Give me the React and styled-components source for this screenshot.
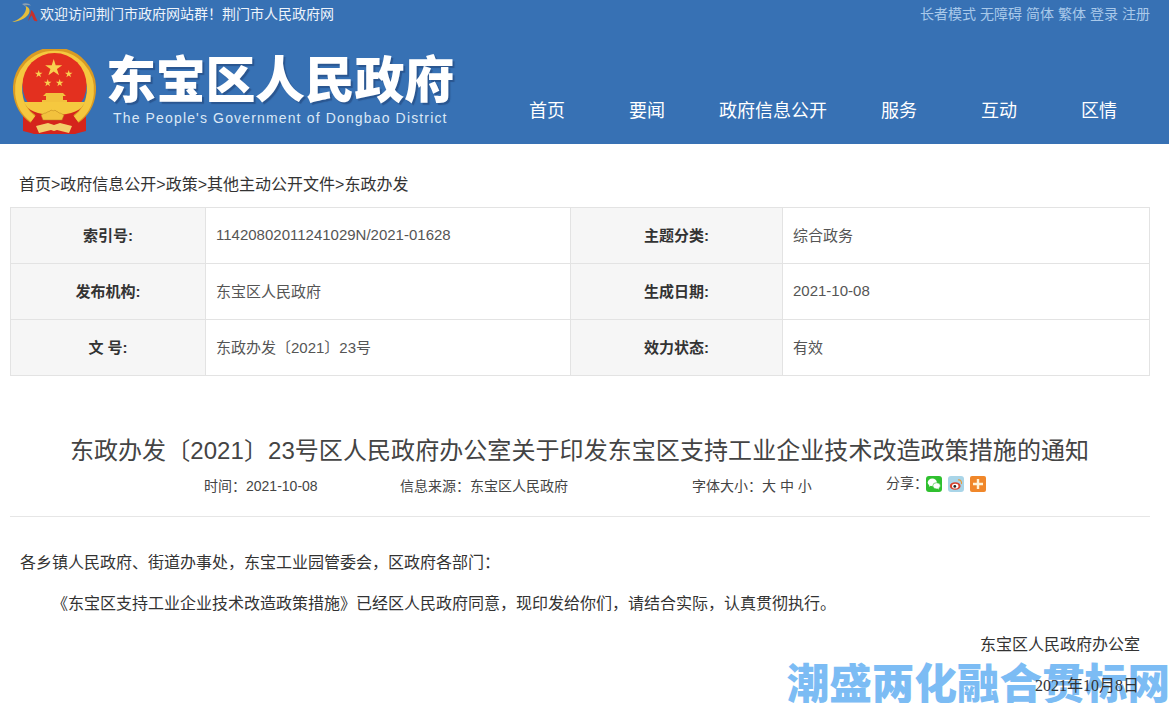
import styled, { createGlobalStyle } from 'styled-components'

const cjk = `"Liberation Sans", "Noto Sans CJK SC", sans-serif`

const Global = createGlobalStyle`
  html, body { margin: 0; padding: 0; background: #fff; }
  body { font-family: ${cjk}; color: #333; }
`

const Page = styled.div`
  position: relative;
  width: 1169px;
  height: 703px;
  overflow: hidden;
`

const Header = styled.header`
  height: 144px;
  background: #3771b4;
  display: flex;
  flex-direction: column;
`

const TopBar = styled.div`
  height: 25px;
  padding: 1px 19px 0 12px;
  box-sizing: border-box;
  display: flex;
  align-items: center;
  justify-content: space-between;
  font-size: 14px;
`

const Welcome = styled.div`
  display: flex;
  align-items: center;
  gap: 1px;
  color: #eef4fb;
`

const Tools = styled.div`
  display: flex;
  gap: 4px;
  color: #a9c9ea;
`

const MainRow = styled.div`
  flex: 1;
  display: flex;
  justify-content: space-between;
  padding-left: 13px;
`

const Brand = styled.div`
  display: flex;
  gap: 11px;
  padding-top: 24px;
`

const BrandText = styled.div`
  display: flex;
  flex-direction: column;
`

const SiteName = styled.div`
  margin: 4px 0 0 -1px;
  font-size: 50px;
  line-height: 56px;
  font-weight: 900;
  letter-spacing: -0.3px;
  white-space: nowrap;
  color: #fff;
  text-shadow: 2px 2px 1px #2a5690;
`

const SiteNameEn = styled.div`
  margin-left: 6px;
  font-size: 14px;
  line-height: 18px;
  letter-spacing: 1.15px;
  white-space: nowrap;
  color: #dbe8f6;
`

const Nav = styled.nav`
  display: flex;
  align-items: flex-end;
  padding: 0 20px 20px 0;
`

const NavItem = styled.a`
  width: ${p => (p.$wide ? '152px' : '100px')};
  text-align: center;
  font-size: 18px;
  line-height: 26px;
  color: #fff;
`

const Crumbs = styled.div`
  padding: 29px 0 0 19px;
  font-size: 16px;
  line-height: 24px;
  color: #333;
`

const InfoTable = styled.div`
  margin: 10px 19px 0 10px;
  display: grid;
  grid-template-columns: 195px 365px 212px 1fr;
  grid-auto-rows: 56px;
  border-top: 1px solid #e3e3e3;
  border-left: 1px solid #e3e3e3;
`

const Cell = styled.div`
  display: flex;
  align-items: center;
  padding-bottom: 3px;
  box-sizing: border-box;
  border-right: 1px solid #e3e3e3;
  border-bottom: 1px solid #e3e3e3;
  font-size: 15px;
  color: ${p => (p.$label ? '#333' : '#555')};
  font-weight: ${p => (p.$label ? 700 : 400)};
  background: ${p => (p.$label ? '#f6f6f6' : '#fff')};
  justify-content: ${p => (p.$label ? 'center' : 'flex-start')};
  padding-left: ${p => (p.$label ? '0' : '10px')};
`

const Heading = styled.h1`
  margin: 57px 10px 0 0;
  text-align: center;
  font-size: 24px;
  line-height: 36px;
  font-weight: 400;
  letter-spacing: 0.07px;
  color: #444;
  white-space: nowrap;
`

const MetaRow = styled.div`
  height: 47px;
  margin: 0 19px 0 10px;
  padding-left: 194px;
  border-bottom: 1px solid #e6e6e6;
  display: grid;
  grid-template-columns: 196px 292px 194px 1fr;
  font-size: 14px;
  color: #444;
`

const MetaItem = styled.div`
  padding-top: 8px;
  line-height: 18px;
  white-space: nowrap;
`

const Share = styled.div`
  display: flex;
  align-items: flex-start;
  gap: 6px;
  padding-top: 7px;
  line-height: 14px;
`

const ShareLabel = styled.span`
  width: 34px;
  white-space: nowrap;
  color: #444;
`

const Article = styled.div`
  padding: 25px 29px 0 20px;
  font-size: 16px;
  line-height: 41px;
  color: #333;
  position: relative;
  z-index: 1;
`

const Para = styled.p`
  margin: 0;
  text-indent: ${p => (p.$indent ? '32px' : '0')};
  text-align: ${p => (p.$right ? 'right' : 'left')};
  white-space: nowrap;
`

const DateLine = styled(Para)`
  font-family: "Liberation Serif", "Noto Sans CJK SC", serif;
  padding-right: 1px;
`

const Watermark = styled.div`
  position: absolute;
  right: -1px;
  bottom: -6px;
  font-size: 42.6px;
  line-height: 50px;
  font-weight: 900;
  white-space: nowrap;
  color: #7cbcf4;
`

const starPoints = (cx, cy, r) => {
  const pts = []
  for (let i = 0; i < 10; i++) {
    const a = -Math.PI / 2 + (i * Math.PI) / 5
    const d = i % 2 ? r * 0.38 : r
    pts.push(`${(cx + d * Math.cos(a)).toFixed(2)},${(cy + d * Math.sin(a)).toFixed(2)}`)
  }
  return pts.join(' ')
}

function Emblem() {
  return (
    <svg width="83" height="86" viewBox="0 0 83 86">
      <path d="M10 58h63v24c-4 1-8 2-11 3H21c-3-1-7-2-11-3z" fill="#d5241c" />
      <path d="M20 70A37 37 0 1 1 63 70" fill="none" stroke="#d99a23" strokeWidth="9" />
      <path d="M20 70A36 36 0 1 1 63 70" fill="none" stroke="#f5c83f" strokeWidth="7" />
      <circle cx="41.5" cy="36" r="32" fill="#e3301f" />
      <polygon points={starPoints(40.7, 19, 9)} fill="#f9d04f" />
      <polygon points={starPoints(25.7, 25, 4)} fill="#f9d04f" />
      <polygon points={starPoints(55.7, 25, 4)} fill="#f9d04f" />
      <polygon points={starPoints(34.7, 34, 4)} fill="#f9d04f" />
      <polygon points={starPoints(46.7, 34, 4)} fill="#f9d04f" />
      <path d="M30 47l3-3h17l3 3h-3v4h4v3H29v-3h4v-4z" fill="#f2c23d" />
      <path d="M11 53h61c-3 8-13 13-30.500 13S14 61 11 53z" fill="#f5c83f" />
      <path d="M33 64c2-2 4-1 5-3 2 1 3 1 4 0 1 2 3 1 4 3 2 0 3 1 5 2l-2 5H30l-2-5c2-1 3-2 5-2z" fill="#f2c23d" stroke="#b77f1f" strokeWidth=".5" />
      <path d="M23 77l12-3 6 2 6-2 12 3-3 7-12-3-3 1-3-1-12 3z" fill="#f3cf6a" />
    </svg>
  )
}

function TopLogo() {
  return (
    <svg width="27" height="20" viewBox="0 0 27 20">
      <path d="M0 19C7 17 13 12 14 6c.2-1.500-.3-2.500-1-3.200 3.300 1 5 3 4.500 6C16.500 14 8 19 0 19z" fill="#e4bd3c" />
      <path d="M10 1c3-1.300 7-.8 9 1.500-2.500-.7-5-.9-6.500.2z" fill="#8b9fb4" />
      <path d="M19 7c2 1 3.500 4 4.500 7l2 4c-2 .6-3.500 0-4.300-2-.5-1.500-1-3-1.800-3.500l-3 5.500c0-3 2.600-6 2.600-11z" fill="#c8302a" />
    </svg>
  )
}

function WechatIcon() {
  return (
    <svg width="16" height="16" viewBox="0 0 16 16">
      <rect width="16" height="16" rx="3" fill="#2fc02f" />
      <ellipse cx="6.300" cy="6.400" rx="4.600" ry="3.800" fill="#fff" />
      <path d="M3.500 8.500l-.6 2.200 2.400-1.200z" fill="#fff" />
      <ellipse cx="10.600" cy="9.800" rx="3.800" ry="3.100" stroke="#2fc02f" strokeWidth=".6" fill="#fff" />
      <path d="M12.400 12l.6 1.600-2-1z" fill="#fff" />
    </svg>
  )
}

function WeiboIcon() {
  return (
    <svg width="16" height="16" viewBox="0 0 16 16">
      <rect width="16" height="16" rx="3" fill="#a9d5e8" />
      <ellipse cx="7.200" cy="10" rx="5.400" ry="3.800" fill="#d9442e" />
      <ellipse cx="7.200" cy="10.200" rx="3.200" ry="2.400" fill="#fff" />
      <circle cx="6.800" cy="10.400" r="1.400" fill="#222" />
      <path d="M10 4c2.500-.5 4 1.400 3.400 4" stroke="#e8993a" strokeWidth="1.200" fill="none" />
    </svg>
  )
}

function PlusIcon() {
  return (
    <svg width="16" height="16" viewBox="0 0 16 16">
      <rect width="16" height="16" rx="2" fill="#f0872a" />
      <path d="M6.800 3h2.400v3.800H13v2.400H9.200V13H6.800V9.200H3V6.800h3.800z" fill="#fff3d8" />
    </svg>
  )
}

const navItems = ['首页', '要闻', '政府信息公开', '服务', '互动', '区情']
const tools = ['长者模式', '无障碍', '简体', '繁体', '登录', '注册']
const infoRows = [
  ['索引号:', '11420802011241029N/2021-01628', '主题分类:', '综合政务'],
  ['发布机构:', '东宝区人民政府', '生成日期:', '2021-10-08'],
  ['文 号:', '东政办发〔2021〕23号', '效力状态:', '有效'],
]

export default function App() {
  return (
    <Page>
      <Global />
      <Header>
        <TopBar>
          <Welcome>
            <TopLogo />
            欢迎访问荆门市政府网站群！荆门市人民政府网
          </Welcome>
          <Tools>
            {tools.map(t => <span key={t}>{t}</span>)}
          </Tools>
        </TopBar>
        <MainRow>
          <Brand>
            <Emblem />
            <BrandText>
              <SiteName>东宝区人民政府</SiteName>
              <SiteNameEn>The People's Government of Dongbao District</SiteNameEn>
            </BrandText>
          </Brand>
          <Nav>
            {navItems.map(n => <NavItem key={n} $wide={n.length > 2}>{n}</NavItem>)}
          </Nav>
        </MainRow>
      </Header>

      <Crumbs>首页&gt;政府信息公开&gt;政策&gt;其他主动公开文件&gt;东政办发</Crumbs>

      <InfoTable>
        {infoRows.map(row => row.map((text, i) => (
          <Cell key={text} $label={i % 2 === 0}>{text}</Cell>
        )))}
      </InfoTable>

      <Heading>东政办发〔2021〕23号区人民政府办公室关于印发东宝区支持工业企业技术改造政策措施的通知</Heading>
      <MetaRow>
        <MetaItem>时间：2021-10-08</MetaItem>
        <MetaItem>信息来源：东宝区人民政府</MetaItem>
        <MetaItem>字体大小：大 中 小</MetaItem>
        <Share>
          <ShareLabel>分享：</ShareLabel>
          <WechatIcon />
          <WeiboIcon />
          <PlusIcon />
        </Share>
      </MetaRow>

      <Article>
        <Para>各乡镇人民政府、街道办事处，东宝工业园管委会，区政府各部门：</Para>
        <Para $indent>《东宝区支持工业企业技术改造政策措施》已经区人民政府同意，现印发给你们，请结合实际，认真贯彻执行。</Para>
        <Para $right>东宝区人民政府办公室</Para>
        <DateLine $right>2021年10月8日</DateLine>
      </Article>
      <Watermark>潮盛两化融合贯标网</Watermark>
    </Page>
  )
}
